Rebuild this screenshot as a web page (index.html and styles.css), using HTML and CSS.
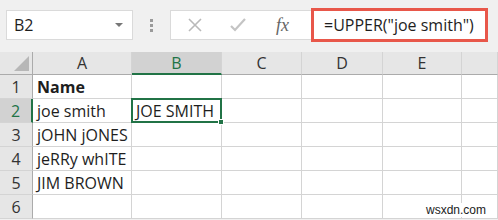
FILE: index.html
```html
<!DOCTYPE html>
<html lang="en">
  <head>
    <meta charset="UTF-8" />
    <title>UPPER function</title>
    <link rel="stylesheet" href="styles.css">
  </head>
  <body>
    <div class="toolbar">
      <div class="name-box">
        <span>B2</span>
        <span class="caret"></span>
      </div>
      <div class="grip"><i></i><i></i><i></i></div>
      <div class="formula-box">
        <svg class="btn-icon" width="14" height="14" viewBox="0 0 14 14">
          <path d="M1 1 L13 13 M13 1 L1 13" stroke="#b9b9b9" stroke-width="1.6" fill="none" />
        </svg>
        <svg class="btn-icon check" width="16" height="14" viewBox="0 0 16 14">
          <path d="M1 8 L5 12 L15 1" stroke="#c4c4c4" stroke-width="2.2" fill="none" />
        </svg>
        <span class="fx">fx</span>
        <div class="formula">=UPPER("joe smith")</div>
      </div>
    </div>

    <div class="sheet">
      <div class="corner"><span class="tri"></span></div>
      <div class="col-head">A</div>
      <div class="col-head active">B</div>
      <div class="col-head">C</div>
      <div class="col-head">D</div>
      <div class="col-head">E</div>
      <div class="col-head"></div>

      <div class="row-head">1</div>
      <div class="cell bold">Name</div>
      <div class="cell"></div><div class="cell"></div><div class="cell"></div><div class="cell"></div><div class="cell"></div>

      <div class="row-head active">2</div>
      <div class="cell">joe smith</div>
      <div class="cell selected">JOE SMITH<span class="handle"></span></div>
      <div class="cell"></div><div class="cell"></div><div class="cell"></div><div class="cell"></div>

      <div class="row-head">3</div>
      <div class="cell">jOHN jONES</div>
      <div class="cell"></div><div class="cell"></div><div class="cell"></div><div class="cell"></div><div class="cell"></div>

      <div class="row-head">4</div>
      <div class="cell">jeRRy whITE</div>
      <div class="cell"></div><div class="cell"></div><div class="cell"></div><div class="cell"></div><div class="cell"></div>

      <div class="row-head">5</div>
      <div class="cell">JIM BROWN</div>
      <div class="cell"></div><div class="cell"></div><div class="cell"></div><div class="cell"></div><div class="cell"></div>

      <div class="row-head">6</div>
      <div class="cell"></div>
      <div class="cell"></div><div class="cell"></div><div class="cell"></div><div class="cell"></div><div class="cell"></div>
    </div>

    <div class="watermark">wsxdn.com</div>
  </body>
</html>
```

FILE: styles.css
```css
:root {
  --grid: #d4d4d4;
  --head: #e6e6e6;
  --head-active: #d2d2d2;
  --green: #217346;
  --text: #1e1e1e;
}

* {
  box-sizing: border-box;
  margin: 0;
  padding: 0;
}

body {
  width: 498px;
  height: 220px;
  overflow: hidden;
  background: #f0f0f0;
  font-family: "Open Sans", "Noto Sans", sans-serif;
  color: var(--text);
  position: relative;
}

.toolbar {
  display: flex;
  align-items: center;
  height: 52px;
  padding: 10px 12px 12px 6px;
}

.name-box {
  width: 127px;
  height: 30px;
  background: white;
  border: 1px solid #dadada;
  display: flex;
  align-items: center;
  justify-content: space-between;
  padding: 0 9px 0 7px;
  font-size: 16px;
}

.caret {
  width: 0;
  height: 0;
  border-left: 4px solid transparent;
  border-right: 4px solid transparent;
  border-top: 4px solid #777;
}

.grip {
  width: 37px;
  display: flex;
  flex-direction: column;
  align-items: center;
  gap: 2px;
}

.grip i {
  width: 3px;
  height: 3px;
  background: #9a9a9a;
}

.formula-box {
  flex: 1;
  height: 30px;
  background: white;
  border: 1px solid #dadada;
  display: flex;
  align-items: center;
  padding-left: 17px;
  position: relative;
}

.btn-icon {
  margin-right: 28px;
}

.btn-icon.check {
  margin-right: 30px;
}

.fx {
  font-family: "Liberation Serif", serif;
  font-style: italic;
  font-size: 18px;
  color: #666;
  width: 30px;
}

.formula {
  position: absolute;
  left: 140px;
  top: -3px;
  right: -3px;
  bottom: -3px;
  border: 3px solid #e8574a;
  display: flex;
  align-items: center;
  padding-left: 10px;
  font-size: 16px;
  background: white;
}

.sheet {
  display: grid;
  grid-template-columns: 33px 99px 90px 80px 81px 79px 36px;
  grid-template-rows: 23px repeat(6, 24px);
  background: white;
  font-size: 16px;
}

.corner {
  background: var(--head);
  border-right: 1px solid #ababab;
  border-bottom: 1px solid #ababab;
  position: relative;
}

.tri {
  position: absolute;
  right: 3px;
  bottom: 3px;
  width: 0;
  height: 0;
  border-left: 15px solid transparent;
  border-bottom: 15px solid #b7b7b7;
}

.col-head {
  background: var(--head);
  border-right: 1px solid var(--grid);
  border-bottom: 1px solid #ababab;
  display: flex;
  align-items: center;
  justify-content: center;
  color: #333;
}

.col-head.active {
  background: var(--head-active);
  border-bottom: 2px solid var(--green);
  color: var(--green);
}

.row-head {
  background: var(--head);
  border-right: 1px solid #ababab;
  border-bottom: 1px solid var(--grid);
  display: flex;
  align-items: center;
  justify-content: center;
  color: #333;
}

.row-head.active {
  background: var(--head-active);
  border-right: 2px solid var(--green);
  color: var(--green);
}

.cell {
  border-right: 1px solid var(--grid);
  border-bottom: 1px solid var(--grid);
  display: flex;
  align-items: center;
  padding-left: 4px;
  white-space: nowrap;
}

.bold {
  font-weight: bold;
}

.selected {
  border: 2px solid var(--green);
  margin: -1px 0 0 -1px;
  padding-left: 3px;
  position: relative;
}

.handle {
  position: absolute;
  right: -4px;
  bottom: -4px;
  width: 6px;
  height: 6px;
  background: var(--green);
  border: 1px solid white;
}

.watermark {
  position: absolute;
  left: 424px;
  top: 203px;
  font-family: "Liberation Sans", sans-serif;
  font-size: 12px;
  color: #222;
  background: white;
  padding: 0 2px;
}
```
